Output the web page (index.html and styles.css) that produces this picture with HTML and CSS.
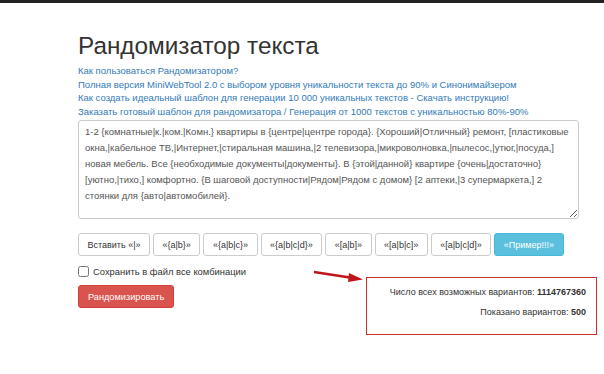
FILE: index.html
```html
<!DOCTYPE html>
<html lang="ru">

<head>
    <meta charset="UTF-8">
    <title>Рандомизатор текста</title>
    <link rel="stylesheet" href="styles.css">
</head>

<body>
    <div class="topbar"></div>
    <div class="page">
        <h1>Рандомизатор текста</h1>
        <ul class="links">
            <li><a href="#">Как пользоваться Рандомизатором?</a></li>
            <li><a href="#">Полная версия MiniWebTool 2.0 с выбором уровня уникальности текста до 90% и Синонимайзером</a></li>
            <li><a href="#">Как создать идеальный шаблон для генерации 10 000 уникальных текстов - Скачать инструкцию!</a></li>
            <li><a href="#">Заказать готовый шаблон для рандомизатора / Генерация от 1000 текстов с уникальностью 80%-90%</a></li>
        </ul>
        <textarea id="source">1-2 {комнатные|к.|ком.|Комн.} квартиры в {центре|центре города}. {Хороший|Отличный} ремонт, [пластиковые окна,|кабельное ТВ,|Интернет,|стиральная машина,|2 телевизора,|микроволновка,|пылесос,|утюг,|посуда,] новая мебель. Все {необходимые документы|документы}. В {этой|данной} квартире {очень|достаточно} [уютно,|тихо,] комфортно. {В шаговой доступности|Рядом|Рядом с домом} [2 аптеки,|3 супермаркета,] 2 стоянки для {авто|автомобилей}.</textarea>
        <div class="tools">
            <button class="btn">Вставить «|»</button>
            <button class="btn">«{a|b}»</button>
            <button class="btn">«{a|b|c}»</button>
            <button class="btn">«{a|b|c|d}»</button>
            <button class="btn">«[a|b]»</button>
            <button class="btn">«[a|b|c]»</button>
            <button class="btn">«[a|b|c|d]»</button>
            <button class="btn btn-info">«Пример!!!»</button>
        </div>
        <div class="bottom">
            <div class="actions">
                <label class="save"><input type="checkbox"> Сохранить в файл все комбинации</label>
                <button class="btn btn-danger">Рандомизировать</button>
            </div>
            <div class="result">
                <p>Число всех возможных вариантов: <b>1114767360</b></p>
                <p>Показано вариантов: <b>500</b></p>
            </div>
            <svg class="arrow" width="52" height="14" viewBox="0 0 52 14">
                <line x1="1" y1="2" x2="40" y2="8" stroke="#c0141b" stroke-width="2.4" />
                <polygon points="36,3 50,9.5 35,12" fill="#c0141b" />
            </svg>
        </div>
    </div>
</body>

</html>
```

FILE: styles.css
```css
body {
    margin: 0;
    font-family: "Liberation Sans", Arial, sans-serif;
    color: #333;
    background: #fff;
}

.topbar {
    height: 3px;
    background: #222;
}

.page {
    width: 520px;
    margin-left: 78px;
}

h1 {
    font-size: 24.3px;
    font-weight: normal;
    margin: 29px 0 4px;
    line-height: 28px;
}

.links {
    list-style: none;
    padding: 0;
    margin: 0;
}

.links li {
    font-size: 9.5px;
    line-height: 13.6px;
}

.links a {
    color: #337ab7;
    text-decoration: none;
}

#source {
    display: block;
    box-sizing: border-box;
    width: 501px;
    height: 99px;
    margin-top: 2px;
    padding: 3px 6px;
    border: 1px solid #ccc;
    border-radius: 3px;
    font-family: inherit;
    font-size: 9.5px;
    line-height: 15.8px;
    color: #555;
    resize: vertical;
}

.tools {
    display: flex;
    gap: 3px;
    margin-top: 14px;
}

.btn {
    height: 23px;
    padding: 0 8.5px;
    border: 1px solid #ccc;
    border-radius: 3px;
    background: #fff;
    color: #333;
    font-family: inherit;
    font-size: 9px;
    white-space: nowrap;
}

.btn-info {
    background: #5bc0de;
    border-color: #46b8da;
    color: #fff;
}

.btn-danger {
    height: 23px;
    padding: 0 9px;
    background: #d9534f;
    border-color: #d43f3a;
    color: #fff;
    font-size: 9.2px;
}

.bottom {
    position: relative;
    display: flex;
    justify-content: space-between;
}

.actions {
    display: flex;
    flex-direction: column;
    align-items: flex-start;
}

.save {
    display: flex;
    align-items: center;
    gap: 4px;
    margin: 10px 0 8px;
    font-size: 9.4px;
}

.save input {
    width: 11px;
    height: 11px;
    margin: 0;
}

.result {
    box-sizing: border-box;
    width: 231px;
    height: 58px;
    margin-top: 21px;
    margin-right: 1px;
    padding: 8px 10px 0;
    border: 1.5px solid #c9302c;
    text-align: right;
    font-size: 9px;
}

.result p {
    margin: 0 0 8px;
    line-height: 12px;
}

.arrow {
    position: absolute;
    left: 235px;
    top: 14px;
}
```
